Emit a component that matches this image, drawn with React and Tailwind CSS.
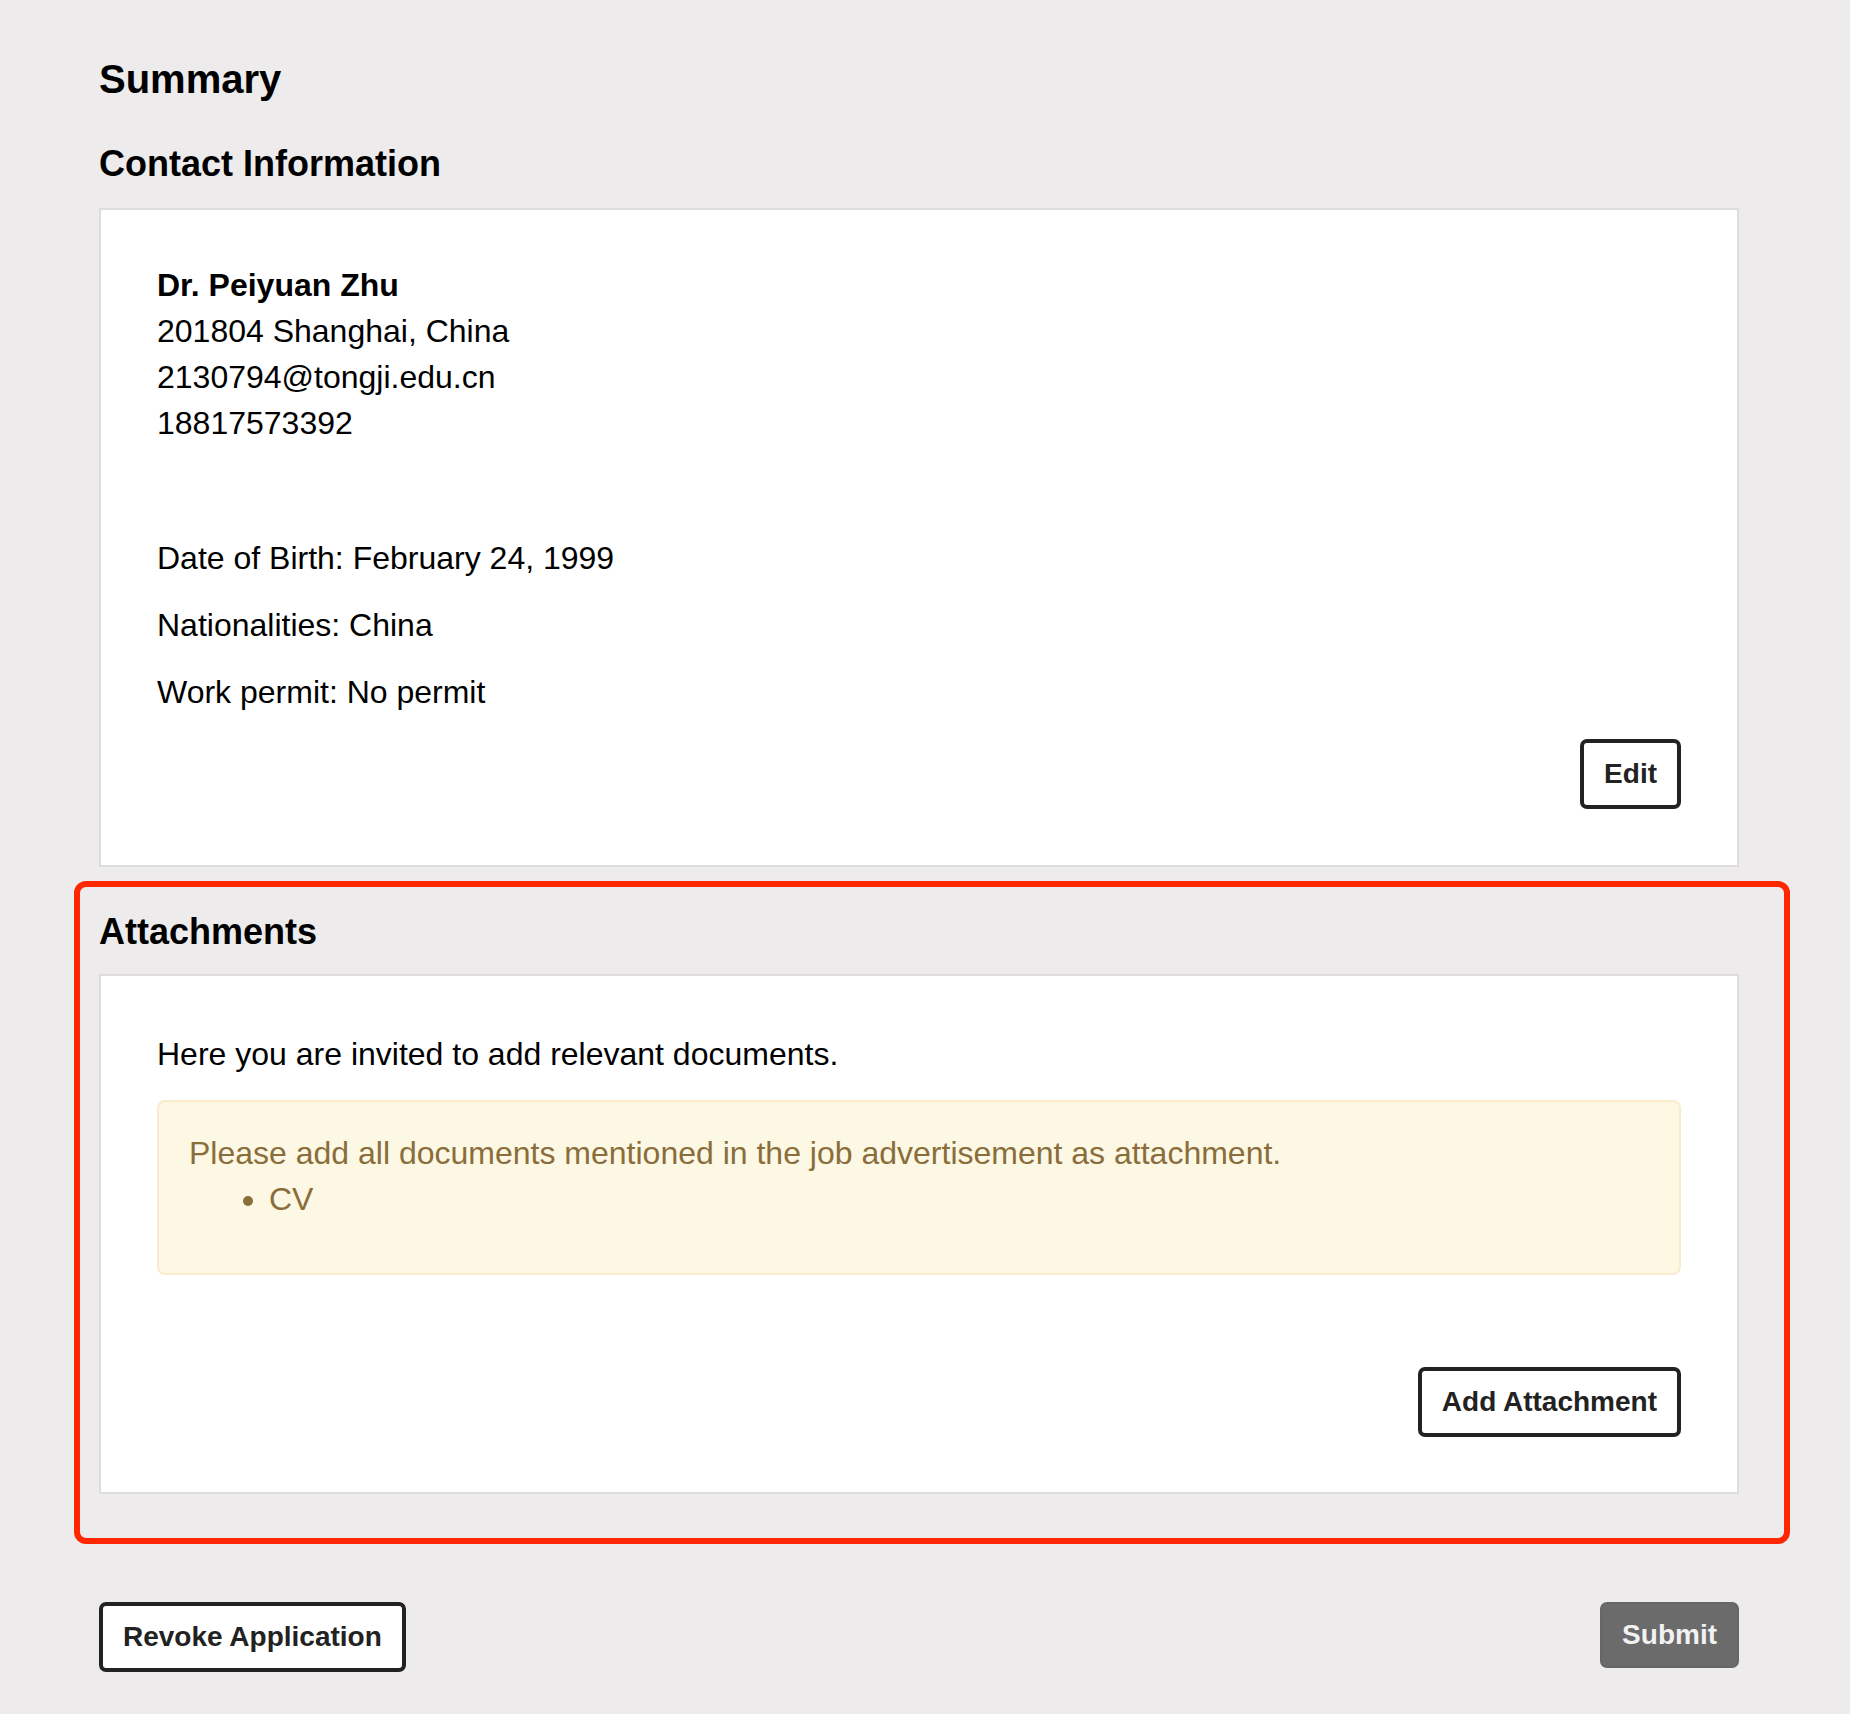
export default function App() {
  const btn =
    "h-[70px] rounded-[7px] border-[4px] border-[#222222] bg-white px-[20px] text-[28px] font-bold leading-none text-[#222222] flex items-center justify-center";
  return (
    <div className="min-h-[1714px] bg-[#edebec] font-['Liberation_Sans',Arial,sans-serif] text-black">
      <div className="ml-[99px] w-[1640px] pt-[56px]">
        <h2 className="text-[40px] font-bold leading-[46px]">Summary</h2>
        <h3 className="mt-[41px] text-[36px] font-bold leading-[42px]">Contact Information</h3>
        <div className="mt-[23px] border-2 border-[#dddddd] bg-white px-[56px] pt-[52px] pb-[56px]">
          <div className="text-[32px] leading-[46px]">
            <div className="font-bold">Dr. Peiyuan Zhu</div>
            <div>201804 Shanghai, China</div>
            <div>2130794@tongji.edu.cn</div>
            <div>18817573392</div>
          </div>
          <p className="mt-[89px] text-[32px] leading-[46px]">Date of Birth: February 24, 1999</p>
          <p className="mt-[21px] text-[32px] leading-[46px]">Nationalities: China</p>
          <p className="mt-[21px] text-[32px] leading-[46px]">Work permit: No permit</p>
          <div className="mt-[24px] flex justify-end">
            <button className={btn}>Edit</button>
          </div>
        </div>

        <div className="relative mt-[44px]">
          <div className="pointer-events-none absolute -top-[30px] -left-[25px] -right-[51px] -bottom-[50px] rounded-[12px] border-[6px] border-[#ff2600]"></div>
          <h3 className="text-[36px] font-bold leading-[42px]">Attachments</h3>
          <div className="mt-[21px] border-2 border-[#dddddd] bg-white px-[56px] pt-[55px] pb-[55px]">
            <p className="text-[32px] leading-[46px]">Here you are invited to add relevant documents.</p>
            <div className="mt-[23px] rounded-[8px] border-2 border-[#faebcc] bg-[#fcf8e3] px-[30px] pt-[28px] pb-[51px] text-[32px] leading-[46px] text-[#8a6d3b]">
              <div>Please add all documents mentioned in the job advertisement as attachment.</div>
              <ul className="list-disc pl-[80px]">
                <li>CV</li>
              </ul>
            </div>
            <div className="mt-[92px] flex justify-end">
              <button className={btn}>Add Attachment</button>
            </div>
          </div>
        </div>

        <div className="mt-[108px] flex items-start justify-between">
          <button className={btn}>Revoke Application</button>
          <button className="h-[66px] rounded-[7px] border-2 border-[#666666] bg-[#6b6b6b] px-[20px] text-[28px] font-bold leading-none text-[#f2f2f2]">
            Submit
          </button>
        </div>
      </div>
    </div>
  );
}
